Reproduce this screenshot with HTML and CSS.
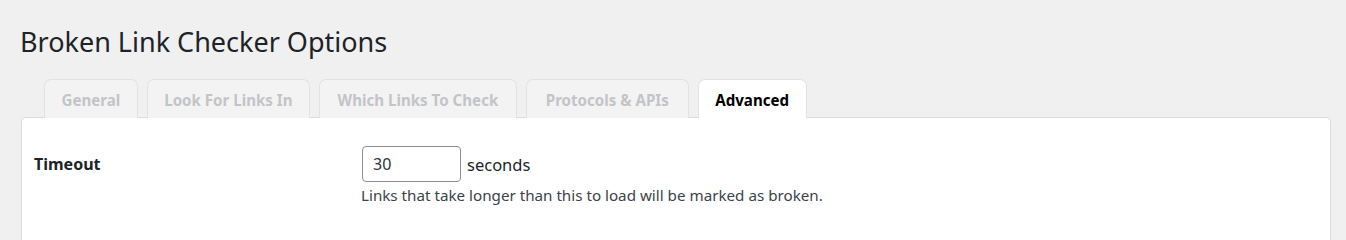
FILE: index.html
```html
<!DOCTYPE html>
<html>
<head>
<meta charset="utf-8">
<link rel="stylesheet" href="styles.css">
</head>
<body>
<div class="wrap">
  <h1 class="title">Broken Link Checker Options</h1>
  <nav class="tabs">
    <span class="tab">General</span>
    <span class="tab">Look For Links In</span>
    <span class="tab tab-which">Which Links To Check</span>
    <span class="tab tab-protocols">Protocols &amp; APIs</span>
    <span class="tab tab-active">Advanced</span>
  </nav>
  <div class="panel">
    <div class="row">
      <div class="label">Timeout</div>
      <div class="field">
        <div class="field-line">
          <input class="num" type="text" value="30">
          <span class="unit">seconds</span>
        </div>
        <p class="desc">Links that take longer than this to load will be marked as broken.</p>
      </div>
    </div>
  </div>
</div>
</body>
</html>
```
FILE: styles.css
```css
html, body {
  margin: 0;
  padding: 0;
  background: #f0f0f1;
  font-family: "Noto Sans", "Open Sans", sans-serif;
  color: #1d2327;
}
.wrap {
  padding: 0 15px 0 21px;
}
.title {
  margin: 0;
  padding: 23px 0 0 0;
  font-size: 27px;
  font-weight: 400;
  line-height: 38px;
  color: #1d2327;
  margin-left: -1px;
}
.tabs {
  display: flex;
  gap: 9px;
  margin-top: 18px;
  padding-left: 23px;
  position: relative;
  z-index: 1;
}
.tab {
  display: block;
  box-sizing: border-box;
  height: 39px;
  padding: 0 16.5px;
  line-height: 41px;
  font-size: 15.1px;
  font-weight: 700;
  color: #c3c4c7;
  background: #f3f3f3;
  border: 1px solid #e2e2e2;
  border-bottom: none;
  border-radius: 7px 7px 0 0;
}
.tab-which {
  padding: 0 17.5px;
}
.tab-protocols {
  padding: 0 19px;
}
.tab-active {
  background: #fff;
  color: #000;
  border-color: #e2e2e2;
  height: 39px;
}
.panel {
  background: #fff;
  border: 1px solid #dcdcde;
  border-radius: 5px;
  margin-top: -1px;
  height: 130px;
  box-sizing: border-box;
}
.row {
  display: flex;
  padding: 28px 12px 0 12px;
}
.label {
  width: 328px;
  font-size: 16px;
  font-weight: 700;
  line-height: 36px;
  color: #1d2327;
}
.field-line {
  display: flex;
  align-items: center;
  gap: 6px;
}
.num {
  box-sizing: border-box;
  width: 99px;
  height: 36px;
  padding: 0 10px;
  border: 1px solid #8c8f94;
  border-radius: 4px;
  font-family: inherit;
  font-size: 16px;
  color: #2c3338;
  background: #fff;
  margin: 0;
}
.unit {
  font-size: 16.5px;
  color: #1d2327;
}
.desc {
  margin: 1px 0 0 -1px;
  font-size: 15.2px;
  line-height: 24px;
  color: #3c434a;
}
```
